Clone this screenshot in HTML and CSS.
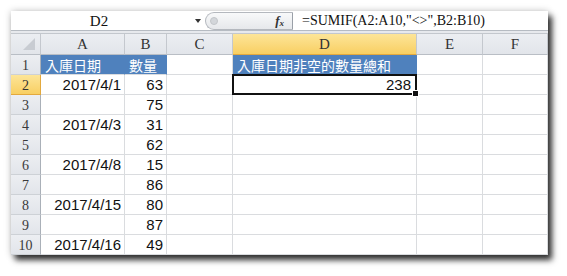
FILE: index.html
```html
<!DOCTYPE html>
<html>
<head>
<meta charset="utf-8">
<link rel="stylesheet" href="styles.css">
</head>
<body>
<div class="window">
  <div class="fbar">
    <div class="namebox">D2</div>
    <div class="drop"><span class="arrow"></span></div>
    <div class="pill"><span class="knob"></span><span class="fx">f<sub>x</sub></span></div>
    <div class="formula">=SUMIF(A2:A10,"&lt;&gt;",B2:B10)</div>
  </div>
  <div class="band"></div>
  <div class="sheet">
    <div class="hd corner"><span class="tri"></span></div>
    <div class="hd col">A</div>
    <div class="hd col">B</div>
    <div class="hd col">C</div>
    <div class="hd col sel">D</div>
    <div class="hd col">E</div>
    <div class="hd col">F</div>

    <div class="hd row">1</div>
    <div class="c blue">入庫日期</div>
    <div class="c blue">數量</div>
    <div class="c"></div>
    <div class="c blue">入庫日期非空的數量總和</div>
    <div class="c"></div>
    <div class="c"></div>

    <div class="hd row sel">2</div>
    <div class="c num">2017/4/1</div>
    <div class="c num">63</div>
    <div class="c"></div>
    <div class="c num active">238</div>
    <div class="c"></div>
    <div class="c"></div>

    <div class="hd row">3</div>
    <div class="c num"></div>
    <div class="c num">75</div>
    <div class="c"></div>
    <div class="c"></div>
    <div class="c"></div>
    <div class="c"></div>

    <div class="hd row">4</div>
    <div class="c num">2017/4/3</div>
    <div class="c num">31</div>
    <div class="c"></div>
    <div class="c"></div>
    <div class="c"></div>
    <div class="c"></div>

    <div class="hd row">5</div>
    <div class="c num"></div>
    <div class="c num">62</div>
    <div class="c"></div>
    <div class="c"></div>
    <div class="c"></div>
    <div class="c"></div>

    <div class="hd row">6</div>
    <div class="c num">2017/4/8</div>
    <div class="c num">15</div>
    <div class="c"></div>
    <div class="c"></div>
    <div class="c"></div>
    <div class="c"></div>

    <div class="hd row">7</div>
    <div class="c num"></div>
    <div class="c num">86</div>
    <div class="c"></div>
    <div class="c"></div>
    <div class="c"></div>
    <div class="c"></div>

    <div class="hd row">8</div>
    <div class="c num">2017/4/15</div>
    <div class="c num">80</div>
    <div class="c"></div>
    <div class="c"></div>
    <div class="c"></div>
    <div class="c"></div>

    <div class="hd row">9</div>
    <div class="c num"></div>
    <div class="c num">87</div>
    <div class="c"></div>
    <div class="c"></div>
    <div class="c"></div>
    <div class="c"></div>

    <div class="hd row">10</div>
    <div class="c num">2017/4/16</div>
    <div class="c num">49</div>
    <div class="c"></div>
    <div class="c"></div>
    <div class="c"></div>
    <div class="c"></div>
  </div>
</div>
</body>
</html>
```

FILE: styles.css
```css
* { box-sizing: border-box; }
html, body { margin: 0; padding: 0; background: #fff; }
body { width: 567px; height: 276px; overflow: hidden; }

.window {
  margin: 11px 0 0 11px;
  width: 537px;
  background: #fff;
  box-shadow: 4px 5px 6px rgba(0,0,0,0.8), 0 0 7px rgba(0,0,0,0.22);
}

.fbar {
  display: flex;
  height: 20px;
  border-bottom: 1px solid #b6bbc2;
  background: #fff;
}
.namebox {
  width: 176px;
  font: 15px/20px "Liberation Serif", serif;
  color: #111;
  text-align: center;
}
.drop {
  width: 18px;
  display: flex;
  align-items: center;
  justify-content: center;
}
.arrow {
  width: 0; height: 0;
  border-left: 3px solid transparent;
  border-right: 3px solid transparent;
  border-top: 4px solid #333;
  margin-left: 4px;
}
.pill {
  width: 88px;
  margin-top: 1px;
  height: 18px;
  border: 1px solid #b4b8be;
  border-right: 1px solid #9aa0a8;
  border-radius: 10px 0 0 10px;
  background: linear-gradient(#f8f9fa, #e6e8eb);
  display: flex;
  align-items: center;
  justify-content: space-between;
  padding: 0 8px 0 4px;
}
.knob {
  width: 8px; height: 8px;
  border-radius: 50%;
  background: #d3d6da;
  border: 1px solid #c3c6ca;
}
.fx {
  font: italic bold 13px/1 "Liberation Serif", serif;
  color: #333;
}
.fx sub { font-size: 9px; vertical-align: -1px; }
.formula {
  flex: 1;
  padding-left: 9px;
  font: 14px/20px "Liberation Serif", serif;
  color: #111;
}

.band {
  background: #e7e9ed;
  border-bottom: 1px solid #c3c7cd;
  height: 3px;
}

.sheet {
  display: grid;
  grid-template-columns: 30px 84px 42px 66px 184px 66px 65px;
  grid-template-rows: 21px repeat(10, 20px);
}

.hd {
  background: linear-gradient(#eceef2, #e2e5ea);
  border-right: 1px solid #c4c8ce;
  border-bottom: 1px solid #b9bec5;
  color: #333;
  font: 15px/20px "Liberation Serif", serif;
  text-align: center;
}
.hd.row {
  font-size: 14px;
  line-height: 21px;
  border-bottom: 1px solid #cdd1d6;
  border-right: 1px solid #aab0b8;
  color: #3a3a3a;
}
.hd.sel {
  background: linear-gradient(#fde598, #f8cf63);
  border-bottom: 1px solid #e3a93e;
  color: #333;
}
.hd.row.sel { border-right: 1px solid #e3a93e; }
.corner { position: relative; }
.tri {
  position: absolute;
  right: 5px; bottom: 4px;
  width: 0; height: 0;
  border-left: 12px solid transparent;
  border-bottom: 12px solid #c8ccd2;
}

.c {
  border-right: 1px solid #dadcdf;
  border-bottom: 1px solid #dadcdf;
  font: 15px/20px "Liberation Sans", "Noto Sans CJK TC", sans-serif;
  color: #111;
  white-space: nowrap;
  overflow: visible;
}
.num { text-align: right; padding-right: 3px; }
.blue {
  background: #4f81bd;
  color: #fff;
  padding-left: 4px;
  font: 14px/20px "Noto Sans CJK TC", sans-serif;
  border-right-color: #4f81bd;
}
.active { position: relative; padding-right: 5px; }
.active::after {
  content: "";
  position: absolute;
  left: -1px; top: -1px; right: -1px; bottom: -1px;
  border: 2px solid #111;
}
.active::before {
  content: "";
  position: absolute;
  right: -3px; bottom: -3px;
  width: 5px; height: 5px;
  background: #111;
  border: 1px solid #fff;
  z-index: 1;
}
```
